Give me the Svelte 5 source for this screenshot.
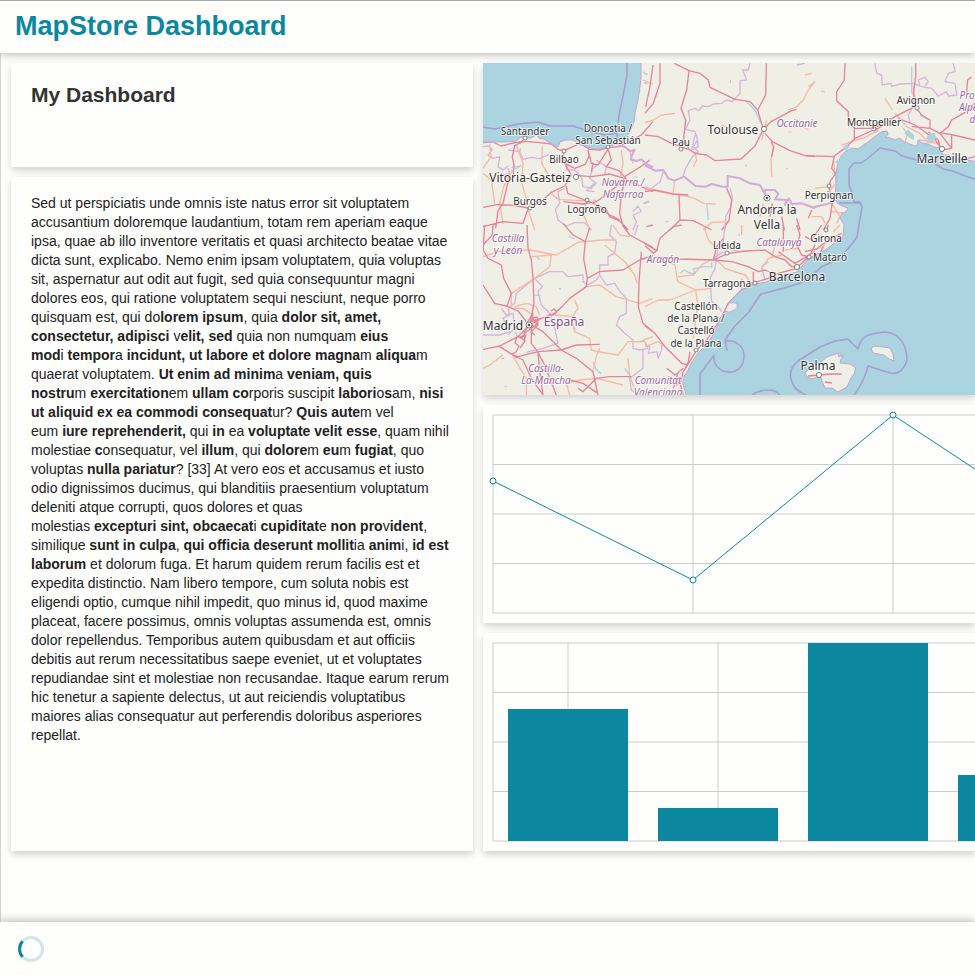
<script>
  // Each sheet covers a part of the map and is drawn at three units per map unit.
  const sheets = [
    {
      x: 483, y: 60,
      motorway: 'M0 248L30 246 55 258 90 249 120 244 165 247 205 252 225 268 243 272 270 260 292 250 320 268 350 270 376 262 410 260 440 243 475 225 510 185M120 240L117 246 95 257 88 290 93 315 90 350 74 370 60 430 45 452 38 505M0 442L45 433 90 436 136 444 180 420 205 397 245 378 265 345 245 310 240 275M245 310L275 325 307 313 318 288 315 270M318 280L325 310 345 315 375 268M330 307L325 335M376 270L385 300 370 320 408 332 428 355 415 400 410 460 418 490M285 347L325 350 380 342 425 355 470 378 510 395M250 378L254 400 310 422 350 438 375 462 405 477 436 510M136 444L120 490 60 485 0 500M242 425L300 432 340 425 400 380 428 355M510 15L500 85 488 140M500 300L476 318 425 350M370 450L380 470 415 485 430 510',
      trunk: 'M60 490L50 430 62 380 88 330M20 252L24 290 5 318 0 325M100 255L120 310 115 365 135 435M178 258L176 310 200 350 245 345M136 450L155 510M205 400L225 418 310 423M310 423L300 460 320 510M415 270L420 310 413 350M450 310L440 270 418 258M390 40M480 60L510 72M0 340L25 360 35 430',
      border: 'M0 260L15 258 28 268 15 285 30 295 50 290 45 320 60 330 75 318M75 270L110 275 120 298 145 292 170 296 200 282M110 283L112 265M60 345L80 340 75 325M245 385L225 395 230 430 217 448 225 480 250 498 275 488 305 488 325 510M255 300L250 330 275 330 295 350 300 380 325 385 340 370 320 355 330 325 350 310M340 300L370 320 365 345M335 370L310 392 335 395M450 455L465 438 475 455 450 465 460 485 450 510M480 430L498 423',
      frontier: 'M405 255L425 260 440 273 455 270 447 285 443 298 460 303 475 298 490 312 510 322',
      water: 'M85 322L118 317M95 327L110 321M455 350l8 3M480 35l8 8M483 68l12 3M465 90l8 4M330 420l10 2'
    },
    {
      x: 645, y: 60,
      motorway: 'M45 10L45 70 25 130 0 160M88 10L132 32 125 90 108 145 122 180 116 235 132 268 150 280 185 285 210 302 288 297 330 258 355 208 338 150 362 105 364 10M132 32L165 40 190 60 195 82 270 118 315 125 338 150M0 225L40 230 80 250 130 268M355 208L378 185 440 152 455 148M360 220L382 245 435 272 480 287 510 290M378 245L386 260 380 290M0 395L30 390 85 402 130 405M102 405L105 480 75 510M105 480L145 482 200 510M245 385L260 420 252 482 230 510M410 470L418 510M455 475L465 510M382 430L375 470M500 450L490 475',
      trunk: 'M0 188L25 180 50 165 90 160M510 65L490 90 475 120 455 140 430 150M386 260L378 300 380 350M0 380L40 395 88 403 132 410 155 418 175 430 212 432M85 400L88 365M200 487L252 485M200 487L175 510M365 180L350 240M230 196L250 200M150 275L155 300 145 320M430 215L440 217M475 200L490 210M300 315L305 318M355 430L345 470M490 405L510 415M0 440M256 60v10',
      border: 'M315 10L310 30 293 30 305 60 285 62 285 100 262 125 245 120 230 130 205 132 190 140 172 138 162 152 150 145 130 152 135 180 122 208 150 215 158 240 145 260 160 275 142 290 122 325 113 350M150 225L140 270 160 260 155 225M55 335L45 365 20 385 0 390M255 385L262 410 258 440 242 470 240 510M0 430L12 425M455 15L480 10',
      frontier: 'M0 316L30 332 55 330 70 355 88 362 118 350 152 378 182 380 200 372 232 380 248 380 248 348 285 355 315 370 345 375 360 402 360 390 390 390 400 402 390 418 425 420 420 435 432 415 440 432 470 430 510 445',
      water: 'M0 40l8 4M0 68h4M185 430L190 480M62 485h8M300 120L330 150 348 190M425 325h4'
    },
    {
      x: 805, y: 60,
      motorway: 'M120 10L118 60 95 95 95 122 130 155 130 178 148 205 200 205 240 190M0 287L85 290 125 260 150 235 205 210 220 205 270 170 330 140 325 100 332 50 332 10M88 290L80 325 92 340 75 365 72 385 82 425 75 475 55 510M330 140L350 165 375 180 375 205 405 220 440 265 410 270 390 238 345 205 330 195 280 175M375 205L350 202 320 200M405 218L445 225 510 240M440 225L440 265M405 220L430 200 440 180 475 160 490 150 510 130M485 95L488 60 500 50M370 215L400 240 405 260M490 295L510 290M148 200L148 240',
      trunk: 'M0 45L20 40M10 80L30 65M240 115L262 150M270 160L305 200 345 220 370 248 405 250M180 190L220 212 180 232 110 255M30 385L72 380M75 390L95 370 85 300M20 470L50 470 60 490M80 430L105 470 95 490M78 455L130 460M310 210L300 250M340 240L390 245',
      border: 'M210 10L215 40 230 45 232 75 258 70 260 80 285 72 325 70 350 80 380 85 400 108 425 95 430 108 455 105 450 70 420 65 430 40 450 35 445 10M345 80L340 60 360 52 370 65 360 78M325 80L330 130 310 165 315 190',
      frontier: 'M0 433L25 442 75 430 92 420',
      water: 'M48 95h12M320 20L320 100M345 165L370 180M295 205L320 235M365 222l18 12'
    },
    {
      x: 483, y: 225,
      motorway: 'M0 75L15 100 55 120 62 160 85 205 75 235 70 245M0 180L35 235 70 243 105 258 130 290M132 0L135 70 145 105 150 160 153 235 145 275 140 300M5 0L0 80M418 0L440 30 510 68M320 8L307 50 302 100 313 160 310 185 260 220 240 242 215 265 175 280 140 300M313 160L350 140 420 135 470 105 510 92M475 80L468 170 466 245 480 295 510 320M0 373L50 363 105 335 140 300M50 365L90 390 120 405 145 460 180 510M90 390L105 395 165 380 235 375 180 320 145 300M235 375L280 360 350 358M235 375L280 400 330 440 345 510M145 300L145 355 165 382 185 420 220 510M165 382L170 440 180 510M260 465L300 475 345 505M340 460L300 500 285 490M340 460L380 455 445 455M30 0L28 30 0 60M240 -5L270 30 307 50M510 0L490 5',
      trunk: 'M0 95L45 80 140 75 220 90 285 52 307 50 360 45 400 45M145 95L205 90 200 125 155 160 85 205M310 185L350 180 400 215 470 235 510 220M365 60L425 110 455 150 462 175M275 225L285 250 265 280 275 320 320 340 325 375 345 380 405 390 435 350 470 350 510 335M330 440L340 395 350 370M85 205L85 250 120 250 150 270M90 395L130 460 130 510M260 510L250 475 290 465 340 460 420 480M390 0L410 30 440 35M95 245L130 235 160 245 170 270M60 390L20 420 0 430M435 400L440 450 460 510M215 270L270 275',
      border: 'M385 0L380 30 400 50 395 85 375 95 375 120 350 120 350 150 370 180 395 175 415 205 430 220 430 265 410 275 400 300 425 325 450 345 450 370 470 375 495 370 485 350 460 350M350 150L340 165 315 180 300 170 300 150 255 155 240 140 200 140 155 160 178 185 165 200 175 240 200 265 215 310 225 355 180 370 130 382M155 160L100 205 95 235 75 250 80 270 60 280 80 320 50 330 0 330M480 375L480 430 440 460 445 495 465 510M55 250L70 270 90 265 95 310 75 330M455 30L465 0',
      frontier: '',
      water: 'M258 35L275 42M160 95l10 8M155 210l18 2M228 190l6 2M330 410L340 435 355 445M335 425L350 445M425 430L440 450M55 400h8M65 485h6M270 300l8 15M95 320l8 10'
    },
    {
      x: 645, y: 225,
      motorway: 'M0 55L35 77 45 40 85 5 110 0M0 62L25 85 38 75M35 95L100 102 205 105 250 85 300 78 360 75 390 95 420 105 440 125 455 125M205 105L260 110 310 125 340 140 360 135 395 150M205 105L215 65 235 40M415 0L415 80M400 80L450 115 510 80M455 0L465 30 455 60 470 90 490 95 455 130 400 145 370 160 330 172 290 195 250 235 225 285 185 345 155 375 140 400 115 440 105 475 115 510M0 302L30 325 60 365 110 415 130 420M135 380L130 410 118 435M65 430L90 450 115 430M100 440L85 490M325 140L325 175M75 470L95 480 110 460M495 90L510 60',
      trunk: 'M35 95L90 120 98 170 152 195 158 235 145 340M100 155L145 150 170 120 195 105M0 245L40 225 75 225 152 195 200 190M210 100L240 130 300 150 320 175M220 60L280 80M350 130L370 100 410 90M380 100L390 60M420 75L460 70M0 365L40 350 60 365M290 0L290 30M210 65L190 45 175 0',
      border: 'M240 0L235 50 220 65 210 130 195 160 200 230 220 245 230 260M0 360L15 365 10 385 35 380 40 400 50 375 50 360M235 80L205 100M360 165L350 125 370 110M290 200L290 160',
      frontier: '',
      water: 'M118 135L135 145 150 145 145 132 175 125 200 125M125 140L145 148M200 110L200 130M105 145L118 135M280 30h5'
    },
    {
      x: 805, y: 225,
      motorway: 'M0 80L35 72 50 60 90 35 110 25M0 35L20 45 50 0M70 0L62 20M0 105L45 85 55 65M15 450L50 448 78 452M50 463L75 468',
      trunk: 'M50 450L113 448M85 20L105 0M30 75L60 60M15 455L5 445',
      border: '',
      frontier: '',
      water: ''
    }
  ];

  const sea = [
    'M480 60H641L641 78 640 87 638 100 635 113 634 122 630 132 624 139 618 143 608 147 600 149 593 149 586 146 580 145 573 140 565 140 560 142 558 147 554 145 550 143 544 139 540 139 536 135 531 138 525 138 521 137 516 141 505 142 497 142 480 142Z',
    'M978 162L968 160 965 157 958 159 948 155 943 155 940 148 934 147 928 144 922 143 918 140 917 146 912 145 908 143 903 141 900 138 895 140 890 138 886 137 888 134 887 131 881 132 877 135 869 141 858 149 852 148 845 152 841 156 838 163 836 173 836 185 835 194 837 203 842 206 848 208 846 212 842 213 840 218 844 225 843 237 832 245 822 252 813 257 808 259 797 272 778 277 766 282 755 284 742 290 733 298 729 303 737 303 737 308 730 312 726 311 720 318 717 328 708 343 698 353 692 362 687 372 683 378 683 384 687 398H978Z'
  ];
  const islands = [
    'M805 373L812 366 822 361 827 357 838 353 839 357 843 355 841 359 840 363 850 364 856 368 854 374 851 378 847 387 838 392 832 388 825 388 822 381 820 375 813 379 807 377Z',
    'M871 348L875 346 883 347 890 348 893 354 894 361 889 359 884 355 878 354 873 353Z'
  ];
  const seaBorders = [
    'M483 127L495 129 518 124 538 122 550 126 573 126 592 132 605 135 617 133 619 115 623 96 627 75 627 63M617 133L617 145',
    'M975 179L965 176 953 171 943 169 929 160 917 160 902 156 895 151 880 148 867 159 861 163 854 163 849 169 849 185 852 193 854 202 860 202 862 207 859 225 857 237 852 244 843 254 832 262 821 267 812 276 798 284 784 288 761 294 754 304 749 312 735 326 725 340 727 351',
    'M839 203H860M725 341C735 340 744 345 744 356C744 368 735 373 729 372C720 372 713 365 714 355L700 374V395M752 395C758 390 773 387 780 395M806 395C790 389 785 371 798 361L820 347 835 341 848 339 858 349C862 333 872 334 884 332C899 332 907 345 907 360C903 373 896 375 887 372L868 366C866 375 860 388 854 395'
  ];
  const places = [
    ['Santander', 525, 135, 10], ['Donostia /', 608, 132, 10], ['San Sebastián', 608, 144, 10],
    ['Bilbao', 564, 163, 10], ['Vitoria-Gasteiz', 530, 182, 12], ['Burgos', 530, 205, 10],
    ['Logroño', 587, 213, 10], ['Pau', 681, 146, 10], ['Toulouse', 733, 134, 12],
    ['Avignon', 916, 104, 10], ['Montpellier', 874, 126, 10], ['Marseille', 942, 163, 12],
    ['Perpignan', 829, 199, 10], ['Andorra la', 767, 214, 12], ['Vella', 767, 229, 12],
    ['Lleida', 727, 249, 10], ['Girona', 826, 242, 10], ['Mataró', 830, 261, 10],
    ['Barcelona', 797, 281, 12], ['Tarragona', 727, 287, 10], ['Castellón', 696, 310, 10],
    ['de la Plana /', 696, 322, 10], ['Castelló', 696, 334, 10], ['de la Plana', 696, 347, 10],
    ['Madrid', 503, 330, 12], ['Palma', 818, 370, 12]
  ];
  const regions = [
    ['Navarra /', 623, 186], ['Nafarroa', 623, 198], ['Occitanie', 797, 127],
    ['Castilla', 508, 242], ['y León', 508, 254], ['Aragón', 663, 263],
    ['Catalunya', 779, 246], ['Castilla-', 546, 372], ['La-Mancha', 546, 384],
    ['Comunitat', 658, 384], ['Valenciana', 658, 396], ['Provence-', 981, 99],
    ['Alpes-Côte', 982, 111], ["d'Azur", 983, 123]
  ];
  const towns = [
    [525, 138], [608, 147], [564, 151], [587, 200], [530, 208], [681, 149], [917, 108],
    [874, 129], [829, 186], [727, 253], [826, 230], [809, 257], [755, 283], [696, 350]
  ];
  const cities = [[576, 177], [764, 129], [942, 149], [797, 267], [819, 375]];
  const capitals = [[767, 198], [529, 325]];

  const rows = [10, 59.5, 109, 158.5, 208];
  const points = [[10, 76], [210, 175], [410, 10], [610, 142]];
  const bars = [[25, 76], [175, 175], [325, 10], [475, 142]];
</script>

<div class="page">
  <header><h1>MapStore Dashboard</h1></header>

  <main>
    <div class="column">
      <section class="card title"><h2>My Dashboard</h2></section>
      <section class="card text">
        <p>Sed ut perspiciatis unde omnis iste natus error sit voluptatem accusantium doloremque laudantium, totam rem aperiam eaque ipsa, quae ab illo inventore veritatis et quasi architecto beatae vitae dicta sunt, explicabo. Nemo enim ipsam voluptatem, quia voluptas sit, aspernatur aut odit aut fugit, sed quia consequuntur magni dolores eos, qui ratione voluptatem sequi nesciunt, neque porro quisquam est, qui do<b>lorem ipsum</b>, quia <b>dolor sit, amet, consectetur, adipisci</b> v<b>elit, sed</b> quia non numquam <b>eius mod</b>i&nbsp;<b>tempor</b>a <b>incidunt, ut labore et dolore magna</b>m <b>aliqua</b>m quaerat voluptatem. <b>Ut enim ad minim</b>a <b>veniam, quis nostru</b>m&nbsp;<b>exercitation</b>em <b>ullam co</b>rporis suscipit <b>labori</b>o<b>s</b>am, <b>nisi ut aliquid ex ea commodi consequat</b>ur? <b>Quis aute</b>m vel eum&nbsp;<b>iure&nbsp;reprehenderit,</b> qui <b>in</b> ea <b>voluptate velit esse</b>, quam nihil molestiae <b>c</b>onsequatur, vel <b>illum</b>, qui <b>dolore</b>m <b>eu</b>m <b>fugiat</b>, quo voluptas <b>nulla pariatur</b>? [33] At vero eos et accusamus et iusto odio dignissimos ducimus, qui blanditiis praesentium voluptatum deleniti atque corrupti, quos dolores et quas molestias&nbsp;<b>excepturi&nbsp;sint, obcaecat</b>i <b>cupiditat</b>e <b>non pro</b>v<b>ident</b>, similique <b>sunt in culpa</b>, <b>qui officia deserunt mollit</b>ia <b>anim</b>i, <b>id est laborum</b> et dolorum fuga. Et harum quidem rerum facilis est et expedita distinctio. Nam libero tempore, cum soluta nobis est eligendi optio, cumque nihil impedit, quo minus id, quod maxime placeat, facere possimus, omnis voluptas assumenda est, omnis dolor repellendus. Temporibus autem quibusdam et aut officiis debitis aut rerum necessitatibus saepe eveniet, ut et voluptates repudiandae sint et molestiae non recusandae. Itaque earum rerum hic tenetur a sapiente delectus, ut aut reiciendis voluptatibus maiores alias consequatur aut perferendis doloribus asperiores repellat.</p>
      </section>
    </div>

    <div class="column">
      <section class="card map">
        <svg viewBox="483 63 492 332" preserveAspectRatio="xMinYMin slice" role="img" aria-label="Map">
          <rect class="land" x="483" y="63" width="492" height="332" />
          {#each sheets as s}
            <g transform="translate({s.x} {s.y}) scale(0.33333)">
              <path class="water" d={s.water} />
              <path class="border" d={s.border} />
              <path class="trunk" d={s.trunk} />
              <path class="motorway" d={s.motorway} />
              <path class="frontier" d={s.frontier} />
            </g>
          {/each}
          <path class="madrid" d="M529 325L533 318 537 317 538 323 532 328 526 332 522 338 517 336 515 343 519 346 516 352 512 354 517 358M529 325L524 332 525 341 520 348M532 318L538 325 531 332 535 335M551 311l3-2 3 3-4 3-4-1M527 323L533 313 532 321 540 319M519 337l7-2-2 5z" />
          {#each sea as d}<path class="sea" {d} />{/each}
          {#each islands as d}<path class="island" {d} />{/each}
          <path class="lagoon" d="M843 148l3-4 4 3-4 4zM904 133l4-3 6 5 0 5-4-2zM926 138l4-5 5 0 1 5-5 5zM835 162l3-3 1 6zM834 176l1 3" />
          <path class="roads" d="M808 376L831 374 842 374M825 382L832 383" />
          <path class="peninsula" d="M727 307L733 303 737 308 728 312" />
          {#each seaBorders as d}<path class="sea-border" {d} />{/each}
          {#each towns as [cx, cy]}<circle class="dot" {cx} {cy} r="2" />{/each}
          {#each cities as [cx, cy]}<circle class="dot" {cx} {cy} r="2.6" />{/each}
          {#each capitals as [cx, cy]}
            <circle class="dot" {cx} {cy} r="3" />
            <circle class="core" {cx} {cy} r="1.3" />
          {/each}
          {#each regions as [name, x, y]}<text class="region" {x} {y}>{name}</text>{/each}
          {#each places as [name, x, y, size]}<text {x} {y} font-size={size}>{name}</text>{/each}
          <text class="country" x="564" y="326">España</text>
        </svg>
      </section>

      <section class="card chart">
        <svg viewBox="0 0 492 218" preserveAspectRatio="xMinYMin slice" role="img" aria-label="Line chart">
          {#each rows as y}<line class="grid" x1="10" x2="700" y1={y} y2={y} />{/each}
          {#each [10, 210, 410, 610] as x}<line class="grid" x1={x} x2={x} y1="10" y2="208" />{/each}
          <polyline points={points.map((p) => p.join()).join(' ')} />
          {#each points as [cx, cy]}<circle class="point" {cx} {cy} r="3" />{/each}
        </svg>
      </section>

      <section class="card chart">
        <svg viewBox="0 0 492 218" preserveAspectRatio="xMinYMin slice" role="img" aria-label="Bar chart">
          {#each rows as y}<line class="grid" x1="10" x2="700" y1={y} y2={y} />{/each}
          {#each [10, 85, 235, 385, 535] as x}<line class="grid" x1={x} x2={x} y1="10" y2="208" />{/each}
          {#each bars as [x, y]}<rect class="bar" {x} {y} width="120" height={208 - y} />{/each}
        </svg>
      </section>
    </div>
  </main>

  <footer>
    <svg class="spinner" viewBox="0 0 26 26" role="img" aria-label="Loading">
      <circle cx="13" cy="13" r="11.5" />
      <path d="M4.6 5.2A11.5 11.5 0 0 0 4.6 20.8" />
    </svg>
  </footer>
</div>

<style>
  :global(body) {
    margin: 0;
    background: #fefefd;
  }
  .page {
    display: flex;
    flex-direction: column;
    min-height: 100vh;
    overflow: hidden;
    font-family: "Liberation Sans", Arial, sans-serif;
    color: #333;
  }
  header, footer, .card {
    background: #fefefd;
    box-shadow: 0 3px 6px rgba(0, 0, 0, 0.06), 0 4px 8px rgba(0, 0, 0, 0.12);
  }
  header {
    position: relative;
    box-sizing: border-box;
    height: 53px;
    padding: 0 15px;
    border-top: 1px solid #aaa;
    box-shadow: 0 2px 8px rgba(0, 0, 0, 0.25);
  }
  h1 {
    margin: 0;
    font-size: 27px;
    line-height: 50px;
    color: #0c87a0;
  }
  main {
    flex: 1;
    display: grid;
    grid-template-columns: 77fr 82fr;
    gap: 10px;
    align-items: start;
    padding: 10px 0 10px 10px;
    border-left: 1px solid #d4d4d4;
  }
  .column {
    display: flex;
    flex-direction: column;
    gap: 10px;
    min-width: 0;
  }
  .title {
    box-sizing: border-box;
    min-height: 104px;
    padding: 18px 20px;
  }
  h2 {
    margin: 0;
    font-size: 21px;
    line-height: 28px;
  }
  .text {
    box-sizing: border-box;
    min-height: 674px;
    padding: 17px 20px;
  }
  p {
    margin: 0;
    font-size: 14px;
    line-height: 19px;
    color: #222;
  }
  svg {
    display: block;
    width: 100%;
  }
  .grid {
    stroke: #ccc;
    stroke-width: 1;
  }
  polyline {
    fill: none;
    stroke: #0c87a0;
  }
  .point {
    fill: #fff;
    stroke: #0c87a0;
  }
  .bar {
    fill: #0c87a0;
  }
  footer {
    position: relative;
    box-sizing: border-box;
    height: 53px;
    padding: 14px 18px;
    box-shadow: 0 -2px 8px rgba(0, 0, 0, 0.25);
  }
  .spinner {
    width: 26px;
    fill: none;
    stroke: #d3e4ea;
    stroke-width: 3;
  }
  .spinner path {
    stroke: #0c87a0;
  }
  .land {
    fill: #f0efe6;
  }
  .map path {
    fill: none;
    stroke-linejoin: round;
  }
  .map .sea {
    fill: #abd3e0;
    stroke: #bfa9d6;
    stroke-width: 1;
  }
  .map .island {
    fill: #f0efe6;
    stroke: #c0a5d2;
  }
  .map .lagoon {
    fill: #abd3e0;
  }
  .map .peninsula {
    fill: #f0efe6;
  }
  .map .sea-border {
    stroke: #a99cce;
    stroke-width: 1.5;
  }
  .map .motorway {
    stroke: #e88398;
    stroke-width: 4;
  }
  .map .madrid, .map .roads {
    stroke: #e88398;
    stroke-width: 1.3;
  }
  .map .trunk {
    stroke: #f9b8a2;
    stroke-width: 4;
  }
  .map .border {
    stroke: #d6b5dd;
    stroke-width: 4;
  }
  .map .frontier {
    stroke: #d3a9d7;
    stroke-width: 6;
  }
  .map .water {
    stroke: #abd3e0;
    stroke-width: 4;
  }
  .dot {
    fill: #fff;
    stroke: #666;
    stroke-width: 0.8;
  }
  .core {
    fill: #555;
  }
  text {
    font-family: "Noto Sans", sans-serif;
    text-anchor: middle;
    fill: #333;
    stroke: rgba(255, 255, 255, 0.7);
    stroke-width: 2;
    stroke-linejoin: round;
    paint-order: stroke;
  }
  .region {
    font-size: 10px;
    font-style: italic;
    fill: #9b6a9f;
  }
  .country {
    font-size: 12px;
    fill: #89508c;
  }
</style>
